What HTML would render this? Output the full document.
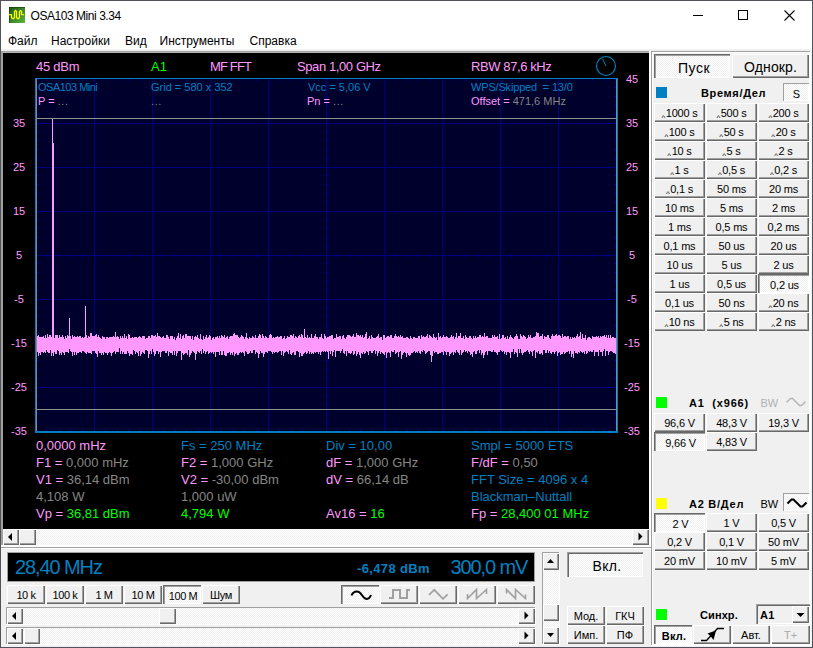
<!DOCTYPE html><html><head><meta charset="utf-8"><title>OSA103 Mini 3.34</title><style>
html,body{margin:0;padding:0}
body{width:813px;height:648px;position:relative;overflow:hidden;background:#f0f0f0;font-family:"Liberation Sans",sans-serif;color:#000}
div,span,svg{position:absolute;box-sizing:border-box;white-space:nowrap}
#win{left:0;top:0;width:813px;height:648px;border:1px solid #50535a;background:#f0f0f0}
#title{left:1px;top:1px;width:811px;height:29px;background:#fff}
#ttxt{left:29.5px;top:7px;font-size:12px;line-height:16px;letter-spacing:-0.45px}
#menu{left:1px;top:30px;width:811px;height:19px;background:#fff;font-size:12px;line-height:16px}
#menu span{top:3px}
.btn{background:#f0f0f0;box-shadow:inset 1px 1px 0 #fff,inset -1px -1px 0 #696969,inset -2px -2px 0 #a0a0a0;text-align:center;font-size:12px}
.btn.dn{background-color:#f8f8f8;background-image:conic-gradient(#fff 25%,#f0f0f0 0 50%,#fff 0 75%,#f0f0f0 0);background-size:2px 2px;box-shadow:inset 1px 1px 0 #696969,inset 2px 2px 0 #a0a0a0,inset -1px -1px 0 #fff}
.dith{background-color:#f8f8f8;background-image:conic-gradient(#fff 25%,#f0f0f0 0 50%,#fff 0 75%,#f0f0f0 0);background-size:2px 2px}
.sbb{background:#f0f0f0;box-shadow:inset 1px 1px 0 #fff,inset -1px -1px 0 #696969,inset -2px -2px 0 #a0a0a0}
.t{font-size:13px;line-height:16px}
.s{font-size:11px;line-height:14px}
.pk{color:#ff99ff}.gn{color:#00ff00}.bl{color:#0080c0}.gy{color:#868686}
.ax{font-size:11px;line-height:14px;color:#ff99ff;width:30px;text-align:center}
.b{font-weight:bold}
</style></head><body>
<div id="win"></div>
<div id="title">
<svg style="left:8px;top:6px" width="16" height="16" viewBox="0 0 16 16"><defs><linearGradient id="g" x1="0" y1="0" x2="1" y2="1"><stop offset="0" stop-color="#1a5410"/><stop offset="1" stop-color="#5cb83e"/></linearGradient></defs><rect width="16" height="16" fill="url(#g)"/><path d="M0 .5H16M.5 0V16" fill="none" stroke="#0c3c02" stroke-opacity=".55"/><path d="M0 7.5H2.5V10.5L3.5 11.5H4.5L5.5 10.5V4.5L6.5 3.5L7.5 4.5V10.5L8.5 11.5H9.5L10.5 10.5V4.5L11.5 3.5L12.5 4.5V7.5H15" fill="none" stroke="#ffff00" stroke-width="1.25" stroke-linejoin="round"/></svg>
<span id="ttxt">OSA103 Mini 3.34</span>
<svg style="left:680px;top:0" width="131" height="29" viewBox="0 0 131 29"><path d="M12 14.5H22M57.5 9.5H66.5V18.5H57.5Z" fill="none" stroke="#000" stroke-width="1" shape-rendering="crispEdges"/><path d="M103.5 9.5L113.5 19.5M113.5 9.5L103.5 19.5" fill="none" stroke="#000" stroke-width="1.1"/></svg>
</div>
<div id="menu"><span style="left:7px">Файл</span><span style="left:50px">Настройки</span><span style="left:124px">Вид</span><span style="left:158.5px">Инструменты</span><span style="left:248.5px">Справка</span></div>
<div style="left:1px;top:51px;width:650px;height:496px;background:#fff"></div>
<div style="left:1px;top:51px;width:648px;height:494px;background:#a0a0a0"></div>
<div style="left:3px;top:52px;width:646px;height:1px;background:#b8b8b8"></div>
<div style="left:3px;top:53px;width:646px;height:476px;background:#000"></div>
<svg style="left:0;top:0" width="660" height="530" viewBox="0 0 660 530" shape-rendering="crispEdges"><rect x="36" y="79" width="581" height="353" fill="#00002c"/><path d="M94.5 79V431M152.5 79V431M210.5 79V431M268.5 79V431M326.5 79V431M384.5 79V431M442.5 79V431M500.5 79V431M558.5 79V431M36 123.5H616M36 167.5H616M36 211.5H616M36 255.5H616M36 299.5H616M36 343.5H616M36 387.5H616" stroke="#000080" stroke-width="1" fill="none"/><path d="M36.5 79V81M36.5 429V431M36.5 254V257M47.5 79V81M47.5 429V431M47.5 254V257M59.5 79V81M59.5 429V431M59.5 254V257M70.5 79V81M70.5 429V431M70.5 254V257M82.5 79V81M82.5 429V431M82.5 254V257M94.5 79V81M94.5 429V431M94.5 254V257M105.5 79V81M105.5 429V431M105.5 254V257M117.5 79V81M117.5 429V431M117.5 254V257M128.5 79V81M128.5 429V431M128.5 254V257M140.5 79V81M140.5 429V431M140.5 254V257M152.5 79V81M152.5 429V431M152.5 254V257M163.5 79V81M163.5 429V431M163.5 254V257M175.5 79V81M175.5 429V431M175.5 254V257M186.5 79V81M186.5 429V431M186.5 254V257M198.5 79V81M198.5 429V431M198.5 254V257M210.5 79V81M210.5 429V431M210.5 254V257M221.5 79V81M221.5 429V431M221.5 254V257M233.5 79V81M233.5 429V431M233.5 254V257M244.5 79V81M244.5 429V431M244.5 254V257M256.5 79V81M256.5 429V431M256.5 254V257M268.5 79V81M268.5 429V431M268.5 254V257M279.5 79V81M279.5 429V431M279.5 254V257M291.5 79V81M291.5 429V431M291.5 254V257M302.5 79V81M302.5 429V431M302.5 254V257M314.5 79V81M314.5 429V431M314.5 254V257M326.5 79V81M326.5 429V431M326.5 254V257M337.5 79V81M337.5 429V431M337.5 254V257M349.5 79V81M349.5 429V431M349.5 254V257M360.5 79V81M360.5 429V431M360.5 254V257M372.5 79V81M372.5 429V431M372.5 254V257M384.5 79V81M384.5 429V431M384.5 254V257M395.5 79V81M395.5 429V431M395.5 254V257M407.5 79V81M407.5 429V431M407.5 254V257M418.5 79V81M418.5 429V431M418.5 254V257M430.5 79V81M430.5 429V431M430.5 254V257M442.5 79V81M442.5 429V431M442.5 254V257M453.5 79V81M453.5 429V431M453.5 254V257M465.5 79V81M465.5 429V431M465.5 254V257M476.5 79V81M476.5 429V431M476.5 254V257M488.5 79V81M488.5 429V431M488.5 254V257M500.5 79V81M500.5 429V431M500.5 254V257M511.5 79V81M511.5 429V431M511.5 254V257M523.5 79V81M523.5 429V431M523.5 254V257M534.5 79V81M534.5 429V431M534.5 254V257M546.5 79V81M546.5 429V431M546.5 254V257M558.5 79V81M558.5 429V431M558.5 254V257M569.5 79V81M569.5 429V431M569.5 254V257M581.5 79V81M581.5 429V431M581.5 254V257M592.5 79V81M592.5 429V431M592.5 254V257M604.5 79V81M604.5 429V431M604.5 254V257M616.5 79V81M616.5 429V431M616.5 254V257M37 79.5H39M614 79.5H616M325 79.5H328M37 87.5H39M614 87.5H616M325 87.5H328M37 96.5H39M614 96.5H616M325 96.5H328M37 105.5H39M614 105.5H616M325 105.5H328M37 114.5H39M614 114.5H616M325 114.5H328M37 123.5H39M614 123.5H616M325 123.5H328M37 131.5H39M614 131.5H616M325 131.5H328M37 140.5H39M614 140.5H616M325 140.5H328M37 149.5H39M614 149.5H616M325 149.5H328M37 158.5H39M614 158.5H616M325 158.5H328M37 167.5H39M614 167.5H616M325 167.5H328M37 175.5H39M614 175.5H616M325 175.5H328M37 184.5H39M614 184.5H616M325 184.5H328M37 193.5H39M614 193.5H616M325 193.5H328M37 202.5H39M614 202.5H616M325 202.5H328M37 211.5H39M614 211.5H616M325 211.5H328M37 219.5H39M614 219.5H616M325 219.5H328M37 228.5H39M614 228.5H616M325 228.5H328M37 237.5H39M614 237.5H616M325 237.5H328M37 246.5H39M614 246.5H616M325 246.5H328M37 255.5H39M614 255.5H616M325 255.5H328M37 263.5H39M614 263.5H616M325 263.5H328M37 272.5H39M614 272.5H616M325 272.5H328M37 281.5H39M614 281.5H616M325 281.5H328M37 290.5H39M614 290.5H616M325 290.5H328M37 299.5H39M614 299.5H616M325 299.5H328M37 307.5H39M614 307.5H616M325 307.5H328M37 316.5H39M614 316.5H616M325 316.5H328M37 325.5H39M614 325.5H616M325 325.5H328M37 334.5H39M614 334.5H616M325 334.5H328M37 343.5H39M614 343.5H616M325 343.5H328M37 351.5H39M614 351.5H616M325 351.5H328M37 360.5H39M614 360.5H616M325 360.5H328M37 369.5H39M614 369.5H616M325 369.5H328M37 378.5H39M614 378.5H616M325 378.5H328M37 387.5H39M614 387.5H616M325 387.5H328M37 395.5H39M614 395.5H616M325 395.5H328M37 404.5H39M614 404.5H616M325 404.5H328M37 413.5H39M614 413.5H616M325 413.5H328M37 422.5H39M614 422.5H616M325 422.5H328M37 431.5H39M614 431.5H616M325 431.5H328" stroke="#000080" stroke-width="1" fill="none"/><path d="M36 118.5H616M36 409.5H616" stroke="#909090" stroke-width="1" fill="none"/><path d="M37.5 336V352M38.5 335V356M39.5 337V353M40.5 337V355M41.5 337V352M42.5 337V352M43.5 336V353M44.5 338V352M45.5 335V353M46.5 338V350M47.5 334V352M48.5 337V353M49.5 335V353M50.5 335V350M51.5 337V356M52.5 119V353M53.5 143V356M54.5 338V352M55.5 335V354M56.5 335V354M57.5 335V350M58.5 338V351M59.5 335V355M60.5 337V353M61.5 337V355M62.5 335V352M63.5 337V353M64.5 339V355M65.5 336V352M66.5 338V352M67.5 335V352M68.5 336V353M69.5 318V349M70.5 336V351M71.5 339V352M72.5 335V356M73.5 337V352M74.5 336V355M75.5 337V352M76.5 337V355M77.5 336V353M78.5 337V353M79.5 336V352M80.5 336V352M81.5 338V353M82.5 337V351M83.5 338V351M84.5 337V352M85.5 306V353M86.5 335V354M87.5 338V352M88.5 336V353M89.5 337V353M90.5 333V353M91.5 333V354M92.5 336V351M93.5 336V351M94.5 336V351M95.5 335V353M96.5 334V354M97.5 337V357M98.5 335V351M99.5 337V353M100.5 338V353M101.5 339V355M102.5 336V353M103.5 337V355M104.5 337V352M105.5 339V353M106.5 337V353M107.5 337V355M108.5 338V353M109.5 337V352M110.5 337V353M111.5 337V356M112.5 337V353M113.5 336V352M114.5 337V351M115.5 332V354M116.5 337V352M117.5 336V352M118.5 337V352M119.5 339V348M120.5 336V354M121.5 338V351M122.5 336V354M123.5 338V352M124.5 334V354M125.5 338V354M126.5 336V354M127.5 339V351M128.5 334V353M129.5 335V356M130.5 338V354M131.5 338V354M132.5 337V355M133.5 338V350M134.5 337V351M135.5 337V354M136.5 337V352M137.5 338V353M138.5 337V356M139.5 336V351M140.5 337V356M141.5 338V354M142.5 336V352M143.5 336V353M144.5 336V354M145.5 339V350M146.5 338V350M147.5 338V351M148.5 336V358M149.5 336V354M150.5 338V351M151.5 335V354M152.5 335V349M153.5 336V352M154.5 336V356M155.5 335V354M156.5 337V351M157.5 333V351M158.5 336V354M159.5 336V352M160.5 337V357M161.5 338V352M162.5 337V351M163.5 336V351M164.5 338V351M165.5 338V353M166.5 335V353M167.5 335V351M168.5 337V356M169.5 339V352M170.5 336V353M171.5 336V353M172.5 336V355M173.5 339V351M174.5 337V355M175.5 340V351M176.5 338V356M177.5 336V353M178.5 333V351M179.5 338V351M180.5 334V351M181.5 339V360M182.5 336V353M183.5 335V355M184.5 338V354M185.5 334V353M186.5 334V353M187.5 336V355M188.5 336V350M189.5 336V357M190.5 336V355M191.5 339V353M192.5 336V351M193.5 340V352M194.5 337V353M195.5 336V360M196.5 337V354M197.5 335V351M198.5 338V352M199.5 339V353M200.5 334V351M201.5 339V354M202.5 340V349M203.5 336V353M204.5 339V351M205.5 337V354M206.5 335V352M207.5 338V351M208.5 337V354M209.5 335V353M210.5 336V352M211.5 340V353M212.5 338V352M213.5 337V354M214.5 339V352M215.5 337V357M216.5 337V352M217.5 336V352M218.5 338V352M219.5 336V355M220.5 338V351M221.5 335V355M222.5 336V355M223.5 337V351M224.5 335V355M225.5 338V356M226.5 337V356M227.5 336V353M228.5 339V353M229.5 337V352M230.5 336V355M231.5 336V353M232.5 336V355M233.5 334V352M234.5 333V356M235.5 335V354M236.5 335V353M237.5 335V355M238.5 337V355M239.5 338V353M240.5 337V352M241.5 335V353M242.5 336V352M243.5 337V353M244.5 339V356M245.5 337V351M246.5 333V352M247.5 338V354M248.5 339V354M249.5 337V353M250.5 338V351M251.5 338V353M252.5 336V353M253.5 337V350M254.5 338V350M255.5 335V354M256.5 338V352M257.5 338V353M258.5 336V358M259.5 334V354M260.5 335V351M261.5 338V353M262.5 334V353M263.5 336V357M264.5 338V354M265.5 336V352M266.5 337V352M267.5 338V353M268.5 338V351M269.5 335V351M270.5 334V351M271.5 335V352M272.5 338V354M273.5 337V352M274.5 338V353M275.5 337V352M276.5 337V352M277.5 336V353M278.5 337V352M279.5 337V351M280.5 336V351M281.5 336V355M282.5 339V351M283.5 338V356M284.5 336V353M285.5 339V352M286.5 338V351M287.5 336V352M288.5 337V354M289.5 337V350M290.5 335V354M291.5 335V355M292.5 336V353M293.5 334V352M294.5 338V355M295.5 336V355M296.5 337V351M297.5 338V351M298.5 336V352M299.5 335V357M300.5 337V353M301.5 334V356M302.5 335V356M303.5 338V354M304.5 329V353M305.5 337V352M306.5 338V354M307.5 335V353M308.5 338V351M309.5 337V354M310.5 338V352M311.5 334V354M312.5 338V353M313.5 338V354M314.5 336V352M315.5 334V353M316.5 337V352M317.5 337V352M318.5 339V354M319.5 337V352M320.5 337V355M321.5 334V352M322.5 338V351M323.5 339V352M324.5 334V351M325.5 336V352M326.5 338V351M327.5 337V352M328.5 337V359M329.5 336V351M330.5 336V354M331.5 335V351M332.5 335V356M333.5 339V352M334.5 338V350M335.5 338V357M336.5 334V351M337.5 337V351M338.5 337V351M339.5 336V351M340.5 336V353M341.5 339V351M342.5 336V349M343.5 335V353M344.5 338V354M345.5 339V351M346.5 337V356M347.5 335V351M348.5 335V353M349.5 335V353M350.5 336V354M351.5 337V353M352.5 336V351M353.5 334V355M354.5 337V354M355.5 337V351M356.5 333V356M357.5 335V354M358.5 335V352M359.5 336V355M360.5 335V358M361.5 337V353M362.5 335V354M363.5 338V352M364.5 337V354M365.5 334V353M366.5 332V351M367.5 339V352M368.5 338V355M369.5 336V351M370.5 339V351M371.5 335V353M372.5 337V353M373.5 338V351M374.5 338V350M375.5 338V354M376.5 337V351M377.5 336V356M378.5 334V353M379.5 338V351M380.5 337V354M381.5 337V352M382.5 340V353M383.5 335V354M384.5 335V355M385.5 338V352M386.5 337V358M387.5 336V353M388.5 336V352M389.5 337V353M390.5 335V357M391.5 335V351M392.5 338V352M393.5 338V352M394.5 336V350M395.5 334V354M396.5 336V353M397.5 337V352M398.5 336V357M399.5 337V352M400.5 335V351M401.5 337V359M402.5 336V355M403.5 338V353M404.5 338V352M405.5 338V353M406.5 337V357M407.5 337V353M408.5 338V355M409.5 339V356M410.5 336V355M411.5 338V353M412.5 339V353M413.5 337V352M414.5 337V351M415.5 338V353M416.5 338V352M417.5 338V353M418.5 336V351M419.5 336V353M420.5 339V354M421.5 335V351M422.5 337V352M423.5 336V350M424.5 337V351M425.5 337V354M426.5 336V353M427.5 334V352M428.5 338V351M429.5 335V351M430.5 336V355M431.5 337V362M432.5 338V356M433.5 334V351M434.5 337V353M435.5 338V352M436.5 337V352M437.5 340V354M438.5 333V354M439.5 337V353M440.5 336V353M441.5 338V352M442.5 337V352M443.5 335V355M444.5 337V351M445.5 337V352M446.5 336V355M447.5 337V352M448.5 338V352M449.5 338V356M450.5 337V354M451.5 335V353M452.5 337V352M453.5 336V355M454.5 339V352M455.5 337V353M456.5 333V350M457.5 338V352M458.5 336V353M459.5 336V355M460.5 333V350M461.5 338V355M462.5 338V353M463.5 336V352M464.5 339V350M465.5 335V352M466.5 337V351M467.5 338V353M468.5 338V351M469.5 336V352M470.5 336V355M471.5 338V354M472.5 339V357M473.5 336V352M474.5 338V351M475.5 336V354M476.5 338V354M477.5 337V351M478.5 337V350M479.5 335V353M480.5 335V350M481.5 337V355M482.5 336V353M483.5 337V358M484.5 333V355M485.5 337V352M486.5 336V351M487.5 336V355M488.5 338V351M489.5 338V351M490.5 338V351M491.5 338V352M492.5 335V352M493.5 337V350M494.5 335V352M495.5 337V352M496.5 337V353M497.5 336V355M498.5 339V352M499.5 334V352M500.5 339V350M501.5 338V351M502.5 335V352M503.5 335V351M504.5 338V354M505.5 337V352M506.5 339V355M507.5 336V352M508.5 339V352M509.5 337V353M510.5 335V358M511.5 337V352M512.5 338V352M513.5 339V349M514.5 337V354M515.5 336V352M516.5 334V353M517.5 336V357M518.5 339V349M519.5 339V353M520.5 334V349M521.5 336V353M522.5 337V355M523.5 335V353M524.5 336V352M525.5 337V352M526.5 339V351M527.5 338V350M528.5 335V352M529.5 337V354M530.5 335V351M531.5 338V352M532.5 338V356M533.5 337V351M534.5 337V350M535.5 336V358M536.5 332V352M537.5 333V353M538.5 333V351M539.5 337V354M540.5 336V354M541.5 336V353M542.5 334V355M543.5 339V350M544.5 336V350M545.5 337V353M546.5 337V353M547.5 335V350M548.5 335V353M549.5 338V351M550.5 339V353M551.5 336V354M552.5 334V352M553.5 336V352M554.5 336V354M555.5 335V352M556.5 334V351M557.5 336V356M558.5 335V353M559.5 335V352M560.5 336V355M561.5 338V354M562.5 334V354M563.5 337V352M564.5 336V354M565.5 336V353M566.5 337V352M567.5 336V352M568.5 336V351M569.5 339V354M570.5 337V351M571.5 339V357M572.5 337V354M573.5 338V358M574.5 337V351M575.5 338V353M576.5 336V353M577.5 334V354M578.5 337V352M579.5 336V353M580.5 332V351M581.5 339V352M582.5 334V353M583.5 338V352M584.5 338V354M585.5 335V351M586.5 340V354M587.5 338V353M588.5 337V351M589.5 337V352M590.5 338V351M591.5 339V352M592.5 336V352M593.5 337V350M594.5 337V356M595.5 337V352M596.5 336V352M597.5 337V352M598.5 336V356M599.5 338V350M600.5 336V352M601.5 337V352M602.5 336V356M603.5 336V351M604.5 335V349M605.5 337V356M606.5 335V351M607.5 338V351M608.5 335V355M609.5 338V352M610.5 335V351M611.5 338V351M612.5 337V352M613.5 337V353M614.5 338V353M615.5 338V354" stroke="#ff99ff" stroke-width="1" fill="none"/><path d="M35.5 78V433M35 78.5H618M617.5 78V433M35 431.5H618M35 432.5H618" stroke="#0080c0" stroke-width="1" fill="none"/><path d="M36.5 79V431M616.5 79V431" stroke="#808890" stroke-width="1" fill="none"/></svg><svg style="left:594px;top:54px" width="24" height="24" viewBox="0 0 24 24"><circle cx="12" cy="12" r="9.5" fill="none" stroke="#0080c0" stroke-width="1.15"/><path d="M12 12L8.5 5" stroke="#0080c0" stroke-width="1" fill="none"/></svg>
<span class="ax" style="left:4px;top:116px">35</span>
<span class="ax" style="left:4px;top:160px">25</span>
<span class="ax" style="left:4px;top:204px">15</span>
<span class="ax" style="left:4px;top:248px">5</span>
<span class="ax" style="left:4px;top:292px">-5</span>
<span class="ax" style="left:4px;top:336px">-15</span>
<span class="ax" style="left:4px;top:380px">-25</span>
<span class="ax" style="left:4px;top:424px">-35</span>
<span class="ax" style="left:617px;top:72px">45</span>
<span class="ax" style="left:617px;top:116px">35</span>
<span class="ax" style="left:617px;top:160px">25</span>
<span class="ax" style="left:617px;top:204px">15</span>
<span class="ax" style="left:617px;top:248px">5</span>
<span class="ax" style="left:617px;top:292px">-5</span>
<span class="ax" style="left:617px;top:336px">-15</span>
<span class="ax" style="left:617px;top:380px">-25</span>
<span class="ax" style="left:617px;top:424px">-35</span>
<span class="t" style="left:36px;top:59px"><span style="position:static;letter-spacing:-0.25px" class="pk">45 dBm</span></span>
<span class="t" style="left:151px;top:59px"><span style="position:static" class="gn">A1</span></span>
<span class="t" style="left:210px;top:59px"><span class="pk" style="position:static;letter-spacing:-0.85px">MF FFT</span></span>
<span class="t" style="left:297px;top:59px"><span style="position:static;letter-spacing:-0.4px" class="pk">Span 1,00 GHz</span></span>
<span class="t" style="left:471px;top:59px"><span style="position:static;letter-spacing:-0.4px" class="pk">RBW 87,6 kHz</span></span>
<span class="s bl" style="left:38px;top:80px"><span style="position:static;letter-spacing:-0.5px">OSA103 Mini</span></span>
<span class="s bl" style="left:151px;top:80px">Grid = 580 x 352</span>
<span class="s bl" style="left:308px;top:80px">Vcc = 5,06 V</span>
<span class="s bl" style="left:471px;top:80px"><span style="position:static;letter-spacing:-0.17px">WPS/Skipped&nbsp; = 13/0</span></span>
<span class="s" style="left:38px;top:94px"><span style="position:static" class="pk">P = </span><span class="gy" style="position:static;letter-spacing:0.6px">...</span></span>
<span class="s gy" style="left:151px;top:94px"><span style="position:static;letter-spacing:0.6px">...</span></span>
<span class="s" style="left:307px;top:94px"><span style="position:static" class="pk">Pn = </span><span class="gy" style="position:static;letter-spacing:0.6px">...</span></span>
<span class="s" style="left:471px;top:94px"><span style="position:static" class="pk">Offset = </span><span style="position:static" class="gy">471,6 MHz</span></span>
<span class="t" style="left:36px;top:438px"><span style="position:static" class="pk">0,0000 mHz</span></span>
<span class="t" style="left:181px;top:438px"><span style="position:static" class="bl">Fs = 250 MHz</span></span>
<span class="t" style="left:326px;top:438px"><span style="position:static" class="bl">Div = 10,00</span></span>
<span class="t" style="left:471px;top:438px"><span style="position:static" class="bl">Smpl = 5000 ETS</span></span>
<span class="t" style="left:36px;top:455px"><span style="position:static" class="pk">F1 = </span><span style="position:static" class="gy">0,000 mHz</span></span>
<span class="t" style="left:181px;top:455px"><span style="position:static" class="pk">F2 = </span><span style="position:static" class="gy">1,000 GHz</span></span>
<span class="t" style="left:326px;top:455px"><span style="position:static" class="pk">dF = </span><span style="position:static" class="gy">1,000 GHz</span></span>
<span class="t" style="left:471px;top:455px"><span style="position:static" class="pk">F/dF = </span><span style="position:static" class="gy">0,50</span></span>
<span class="t" style="left:36px;top:472px"><span style="position:static" class="pk">V1 = </span><span style="position:static" class="gy">36,14 dBm</span></span>
<span class="t" style="left:181px;top:472px"><span style="position:static" class="pk">V2 = </span><span style="position:static" class="gy">-30,00 dBm</span></span>
<span class="t" style="left:326px;top:472px"><span style="position:static" class="pk">dV = </span><span style="position:static" class="gy">66,14 dB</span></span>
<span class="t" style="left:471px;top:472px"><span style="position:static" class="bl">FFT Size = 4096 x 4</span></span>
<span class="t" style="left:36px;top:489px"><span style="position:static" class="gy">4,108 W</span></span>
<span class="t" style="left:181px;top:489px"><span style="position:static" class="gy">1,000 uW</span></span>
<span class="t" style="left:471px;top:489px"><span style="position:static" class="bl">Blackman–Nuttall</span></span>
<span class="t" style="left:36px;top:506px"><span style="position:static" class="pk">Vp = </span><span style="position:static" class="gn">36,81 dBm</span></span>
<span class="t" style="left:181px;top:506px"><span style="position:static" class="gn">4,794 W</span></span>
<span class="t" style="left:326px;top:506px"><span style="position:static" class="pk">Av16 = </span><span style="position:static" class="gn">16</span></span>
<span class="t" style="left:471px;top:506px"><span style="position:static" class="pk">Fp = </span><span style="position:static" class="gn">28,400 01 MHz</span></span>
<div class="dith" style="left:3px;top:529px;width:646px;height:16px"></div>
<div class="sbb" style="left:3px;top:529px;width:16px;height:16px"></div>
<div class="sbb" style="left:632px;top:529px;width:17px;height:16px"></div>
<svg style="left:3px;top:529px" width="16" height="16" viewBox="0 0 16 16"><path d="M9 4V12L5 8Z" fill="#000"/></svg>
<svg style="left:632px;top:529px" width="17" height="16" viewBox="0 0 17 16"><path d="M6.5 3.5V11.5L10.5 7.5Z" fill="#000"/></svg>
<div class="sbb" style="left:19px;top:529px;width:17px;height:16px"></div>
<div style="left:1px;top:547px;width:650px;height:1px;background:#a0a0a0"></div>
<div style="left:2px;top:548px;width:649px;height:1px;background:#fff"></div>
<div style="left:7px;top:552px;width:528px;height:30px;background:#a0a0a0"></div>
<div style="left:8px;top:553px;width:526px;height:28px;background:#000"></div>
<span class="bl" style="left:15px;top:555px;font-size:20px;line-height:24px;letter-spacing:-1.1px">28,40 MHz</span>
<span class="bl b" style="left:357px;top:561px;font-size:13px;line-height:16px;letter-spacing:0.35px">-6,478 dBm</span>
<span class="bl" style="left:450.5px;top:555px;font-size:20px;line-height:24px;letter-spacing:-1.1px">300,0 mV</span>
<div class="btn" style="left:7px;top:585px;width:38px;height:19px;line-height:21px;font-size:11px;letter-spacing:-0.4px">10 k</div>
<div class="btn" style="left:46px;top:585px;width:38px;height:19px;line-height:21px;font-size:11px;letter-spacing:-0.4px">100 k</div>
<div class="btn" style="left:85px;top:585px;width:38px;height:19px;line-height:21px;font-size:11px;letter-spacing:-0.4px">1 M</div>
<div class="btn" style="left:124px;top:585px;width:38px;height:19px;line-height:21px;font-size:11px;letter-spacing:-0.4px">10 M</div>
<div class="btn dn" style="left:163px;top:585px;width:38px;height:19px;line-height:23px;font-size:11px;letter-spacing:-0.4px;text-indent:2px">100 M</div>
<div class="btn" style="left:202px;top:585px;width:38px;height:19px;line-height:21px;font-size:11px;letter-spacing:-0.4px">Шум</div>
<div class="btn dn" style="left:341px;top:585px;width:38px;height:19px"></div>
<svg style="left:341px;top:585px" width="38" height="19" viewBox="0 0 38 19"><path d="M10.5 10.5Q12 6.5 16 6.5Q18.5 6.5 21 10.2Q23.5 14 26 14Q28.5 14 30 10" fill="none" stroke="#000" stroke-width="2" stroke-linejoin="miter"/></svg>
<div class="btn" style="left:380px;top:585px;width:38px;height:19px"></div>
<svg style="left:380px;top:585px" width="38" height="19" viewBox="0 0 38 19"><path d="M9 13H13V5H19.5V13H26.5V5H29.5" fill="none" stroke="#a0a0a0" stroke-width="2" stroke-linejoin="miter" shape-rendering="crispEdges"/></svg>
<div class="btn" style="left:419px;top:585px;width:38px;height:19px"></div>
<svg style="left:419px;top:585px" width="38" height="19" viewBox="0 0 38 19"><path d="M10 10L15.2 4.8L24 13.8L28.6 9.4" fill="none" stroke="#a0a0a0" stroke-width="1.7" stroke-linejoin="miter"/></svg>
<div class="btn" style="left:458px;top:585px;width:38px;height:19px"></div>
<svg style="left:458px;top:585px" width="38" height="19" viewBox="0 0 38 19"><path d="M9.5 9V13.5L18.5 4.5V13.5L28.5 4.5V9" fill="none" stroke="#a0a0a0" stroke-width="1.6" stroke-linejoin="miter"/></svg>
<div class="btn" style="left:497px;top:585px;width:38px;height:19px"></div>
<svg style="left:497px;top:585px" width="38" height="19" viewBox="0 0 38 19"><path d="M9.5 8.5V4.5L18.5 13.5V4.5L28.5 13.5V9.5" fill="none" stroke="#a0a0a0" stroke-width="1.6" stroke-linejoin="miter"/></svg>
<div style="left:6px;top:607px;width:530px;height:18px;background:#fff"></div><div style="left:6px;top:607px;width:529px;height:17px;background:#a0a0a0"></div>
<div style="left:6px;top:627px;width:530px;height:18px;background:#fff"></div><div style="left:6px;top:627px;width:529px;height:17px;background:#a0a0a0"></div>
<div class="dith" style="left:7px;top:608px;width:528px;height:16px"></div>
<div class="sbb" style="left:7px;top:608px;width:16px;height:16px"></div>
<div class="sbb" style="left:518px;top:608px;width:17px;height:16px"></div>
<svg style="left:7px;top:608px" width="16" height="16" viewBox="0 0 16 16"><path d="M9 4V12L5 8Z" fill="#000"/></svg>
<svg style="left:518px;top:608px" width="17" height="16" viewBox="0 0 17 16"><path d="M6.5 3.5V11.5L10.5 7.5Z" fill="#000"/></svg>
<div class="sbb" style="left:159px;top:608px;width:17px;height:16px"></div>
<div class="dith" style="left:7px;top:628px;width:528px;height:16px"></div>
<div class="sbb" style="left:7px;top:628px;width:16px;height:16px"></div>
<div class="sbb" style="left:518px;top:628px;width:17px;height:16px"></div>
<svg style="left:7px;top:628px" width="16" height="16" viewBox="0 0 16 16"><path d="M9 4V12L5 8Z" fill="#000"/></svg>
<svg style="left:518px;top:628px" width="17" height="16" viewBox="0 0 17 16"><path d="M6.5 3.5V11.5L10.5 7.5Z" fill="#000"/></svg>
<div class="sbb" style="left:24px;top:628px;width:16px;height:16px"></div>
<div style="left:542px;top:552px;width:18px;height:93px;background:#fff"></div><div style="left:542px;top:552px;width:17px;height:92px;background:#a0a0a0"></div>
<div class="dith" style="left:543px;top:553px;width:16px;height:91px"></div>
<div class="sbb" style="left:543px;top:553px;width:16px;height:17px"></div>
<div class="sbb" style="left:543px;top:627px;width:16px;height:17px"></div>
<div class="sbb" style="left:543px;top:604px;width:16px;height:17px"></div>
<svg style="left:543px;top:553px" width="16" height="16" viewBox="0 0 16 16"><path d="M4 10H11L7.5 6Z" fill="#000"/></svg>
<svg style="left:543px;top:627px" width="16" height="16" viewBox="0 0 16 16"><path d="M4 6H11L7.5 10Z" fill="#000"/></svg>
<div class="btn dn" style="left:567px;top:552px;width:76px;height:25px;line-height:28px;font-size:14px;letter-spacing:0.3px;text-indent:4px;box-shadow:inset 1px 1px 0 #a0a0a0,inset 2px 2px 0 #696969,inset -1px -1px 0 #fff">Вкл.</div>
<div class="btn" style="left:567px;top:606px;width:38px;height:19px;line-height:21px;font-size:11px">Мод.</div>
<div class="btn" style="left:606px;top:606px;width:38px;height:19px;line-height:21px;font-size:11px">ГКЧ</div>
<div class="btn" style="left:567px;top:625px;width:38px;height:19px;line-height:21px;font-size:11px">Имп.</div>
<div class="btn" style="left:606px;top:625px;width:38px;height:19px;line-height:21px;font-size:11px">ПФ</div>
<div style="left:651px;top:51px;width:160px;height:595px;background:#fff"></div>
<div style="left:651px;top:51px;width:159px;height:594px;background:#a0a0a0"></div>
<div style="left:652px;top:52px;width:158px;height:593px;background:#fff"></div>
<div style="left:653px;top:53px;width:156px;height:591px;background:#f0f0f0"></div>
<div class="btn dn" style="left:654px;top:54px;width:76px;height:24px;line-height:28px;font-size:14px;letter-spacing:0.55px;text-indent:4px">Пуск</div>
<div class="btn" style="left:732px;top:54px;width:77px;height:24px;line-height:26px;font-size:14px;letter-spacing:0.1px">Однокр.</div>
<div style="left:656px;top:87px;width:11px;height:11px;background:#0080c0"></div>
<span class="b" style="left:701px;top:86px;font-size:11px;line-height:14px;letter-spacing:0.65px">Время/Дел</span>
<div class="btn dn" style="left:783px;top:83px;width:26px;height:18px;line-height:22px;font-size:11px;text-indent:1px;box-shadow:inset 1px 1px 0 #a0a0a0,inset -1px -1px 0 #fff">S</div>
<div class="btn" style="left:654px;top:103px;width:51px;height:19px;line-height:21px;font-size:11px;letter-spacing:-0.2px"><span style="position:static;font-size:8px;vertical-align:-3px;letter-spacing:0;color:#000;margin-right:0.5px">^</span>1000 s</div>
<div class="btn" style="left:706px;top:103px;width:51px;height:19px;line-height:21px;font-size:11px;letter-spacing:-0.2px"><span style="position:static;font-size:8px;vertical-align:-3px;letter-spacing:0;color:#000;margin-right:0.5px">^</span>500 s</div>
<div class="btn" style="left:758px;top:103px;width:51px;height:19px;line-height:21px;font-size:11px;letter-spacing:-0.2px"><span style="position:static;font-size:8px;vertical-align:-3px;letter-spacing:0;color:#000;margin-right:0.5px">^</span>200 s</div>
<div class="btn" style="left:654px;top:122px;width:51px;height:19px;line-height:21px;font-size:11px;letter-spacing:-0.2px"><span style="position:static;font-size:8px;vertical-align:-3px;letter-spacing:0;color:#000;margin-right:0.5px">^</span>100 s</div>
<div class="btn" style="left:706px;top:122px;width:51px;height:19px;line-height:21px;font-size:11px;letter-spacing:-0.2px"><span style="position:static;font-size:8px;vertical-align:-3px;letter-spacing:0;color:#000;margin-right:0.5px">^</span>50 s</div>
<div class="btn" style="left:758px;top:122px;width:51px;height:19px;line-height:21px;font-size:11px;letter-spacing:-0.2px"><span style="position:static;font-size:8px;vertical-align:-3px;letter-spacing:0;color:#000;margin-right:0.5px">^</span>20 s</div>
<div class="btn" style="left:654px;top:141px;width:51px;height:19px;line-height:21px;font-size:11px;letter-spacing:-0.2px"><span style="position:static;font-size:8px;vertical-align:-3px;letter-spacing:0;color:#000;margin-right:0.5px">^</span>10 s</div>
<div class="btn" style="left:706px;top:141px;width:51px;height:19px;line-height:21px;font-size:11px;letter-spacing:-0.2px"><span style="position:static;font-size:8px;vertical-align:-3px;letter-spacing:0;color:#000;margin-right:0.5px">^</span>5 s</div>
<div class="btn" style="left:758px;top:141px;width:51px;height:19px;line-height:21px;font-size:11px;letter-spacing:-0.2px"><span style="position:static;font-size:8px;vertical-align:-3px;letter-spacing:0;color:#000;margin-right:0.5px">^</span>2 s</div>
<div class="btn" style="left:654px;top:160px;width:51px;height:19px;line-height:21px;font-size:11px;letter-spacing:-0.2px"><span style="position:static;font-size:8px;vertical-align:-3px;letter-spacing:0;color:#000;margin-right:0.5px">^</span>1 s</div>
<div class="btn" style="left:706px;top:160px;width:51px;height:19px;line-height:21px;font-size:11px;letter-spacing:-0.2px"><span style="position:static;font-size:8px;vertical-align:-3px;letter-spacing:0;color:#000;margin-right:0.5px">^</span>0,5 s</div>
<div class="btn" style="left:758px;top:160px;width:51px;height:19px;line-height:21px;font-size:11px;letter-spacing:-0.2px"><span style="position:static;font-size:8px;vertical-align:-3px;letter-spacing:0;color:#000;margin-right:0.5px">^</span>0,2 s</div>
<div class="btn" style="left:654px;top:179px;width:51px;height:19px;line-height:21px;font-size:11px;letter-spacing:-0.2px"><span style="position:static;font-size:8px;vertical-align:-3px;letter-spacing:0;color:#000;margin-right:0.5px">^</span>0,1 s</div>
<div class="btn" style="left:706px;top:179px;width:51px;height:19px;line-height:21px;font-size:11px;letter-spacing:-0.2px">50 ms</div>
<div class="btn" style="left:758px;top:179px;width:51px;height:19px;line-height:21px;font-size:11px;letter-spacing:-0.2px">20 ms</div>
<div class="btn" style="left:654px;top:198px;width:51px;height:19px;line-height:21px;font-size:11px;letter-spacing:-0.2px">10 ms</div>
<div class="btn" style="left:706px;top:198px;width:51px;height:19px;line-height:21px;font-size:11px;letter-spacing:-0.2px">5 ms</div>
<div class="btn" style="left:758px;top:198px;width:51px;height:19px;line-height:21px;font-size:11px;letter-spacing:-0.2px">2 ms</div>
<div class="btn" style="left:654px;top:217px;width:51px;height:19px;line-height:21px;font-size:11px;letter-spacing:-0.2px">1 ms</div>
<div class="btn" style="left:706px;top:217px;width:51px;height:19px;line-height:21px;font-size:11px;letter-spacing:-0.2px">0,5 ms</div>
<div class="btn" style="left:758px;top:217px;width:51px;height:19px;line-height:21px;font-size:11px;letter-spacing:-0.2px">0,2 ms</div>
<div class="btn" style="left:654px;top:236px;width:51px;height:19px;line-height:21px;font-size:11px;letter-spacing:-0.2px">0,1 ms</div>
<div class="btn" style="left:706px;top:236px;width:51px;height:19px;line-height:21px;font-size:11px;letter-spacing:-0.2px">50 us</div>
<div class="btn" style="left:758px;top:236px;width:51px;height:19px;line-height:21px;font-size:11px;letter-spacing:-0.2px">20 us</div>
<div class="btn" style="left:654px;top:255px;width:51px;height:19px;line-height:21px;font-size:11px;letter-spacing:-0.2px">10 us</div>
<div class="btn" style="left:706px;top:255px;width:51px;height:19px;line-height:21px;font-size:11px;letter-spacing:-0.2px">5 us</div>
<div class="btn" style="left:758px;top:255px;width:51px;height:19px;line-height:21px;font-size:11px;letter-spacing:-0.2px">2 us</div>
<div class="btn" style="left:654px;top:274px;width:51px;height:19px;line-height:21px;font-size:11px;letter-spacing:-0.2px">1 us</div>
<div class="btn" style="left:706px;top:274px;width:51px;height:19px;line-height:21px;font-size:11px;letter-spacing:-0.2px">0,5 us</div>
<div class="btn dn" style="left:758px;top:274px;width:51px;height:19px;line-height:23px;font-size:11px;letter-spacing:-0.2px;text-indent:2px">0,2 us</div>
<div class="btn" style="left:654px;top:293px;width:51px;height:19px;line-height:21px;font-size:11px;letter-spacing:-0.2px">0,1 us</div>
<div class="btn" style="left:706px;top:293px;width:51px;height:19px;line-height:21px;font-size:11px;letter-spacing:-0.2px">50 ns</div>
<div class="btn" style="left:758px;top:293px;width:51px;height:19px;line-height:21px;font-size:11px;letter-spacing:-0.2px"><span style="position:static;font-size:8px;vertical-align:-3px;letter-spacing:0;color:#000;margin-right:0.5px">^</span>20 ns</div>
<div class="btn" style="left:654px;top:312px;width:51px;height:19px;line-height:21px;font-size:11px;letter-spacing:-0.2px"><span style="position:static;font-size:8px;vertical-align:-3px;letter-spacing:0;color:#000;margin-right:0.5px">^</span>10 ns</div>
<div class="btn" style="left:706px;top:312px;width:51px;height:19px;line-height:21px;font-size:11px;letter-spacing:-0.2px"><span style="position:static;font-size:8px;vertical-align:-3px;letter-spacing:0;color:#000;margin-right:0.5px">^</span>5 ns</div>
<div class="btn" style="left:758px;top:312px;width:51px;height:19px;line-height:21px;font-size:11px;letter-spacing:-0.2px"><span style="position:static;font-size:8px;vertical-align:-3px;letter-spacing:0;color:#000;margin-right:0.5px">^</span>2 ns</div>
<div style="left:656px;top:397px;width:11px;height:11px;background:#00ff00"></div>
<span class="b" style="left:689px;top:396px;font-size:11px;line-height:14px;letter-spacing:0.8px">A1&nbsp; (x966)</span>
<span style="left:760.5px;top:396px;font-size:11px;line-height:14px;color:#b0b0b0">BW</span>
<svg style="left:783px;top:393px" width="26" height="18" viewBox="0 0 26 18"><path d="M3.5 9.5L7.5 5.5H9.5L16.5 12.5H18.5L22.5 8.5" fill="none" stroke="#b4b4b4" stroke-width="1.4"/></svg>
<div class="btn" style="left:654px;top:413px;width:51px;height:19px;line-height:21px;font-size:11px;letter-spacing:-0.2px">96,6 V</div>
<div class="btn" style="left:706px;top:413px;width:51px;height:19px;line-height:21px;font-size:11px;letter-spacing:-0.2px">48,3 V</div>
<div class="btn" style="left:758px;top:413px;width:51px;height:19px;line-height:21px;font-size:11px;letter-spacing:-0.2px">19,3 V</div>
<div class="btn dn" style="left:654px;top:432px;width:51px;height:19px;line-height:23px;font-size:11px;letter-spacing:-0.2px;text-indent:2px">9,66 V</div>
<div class="btn" style="left:706px;top:432px;width:51px;height:19px;line-height:21px;font-size:11px;letter-spacing:-0.2px">4,83 V</div>
<div style="left:656px;top:498px;width:11px;height:11px;background:#ffff00"></div>
<span class="b" style="left:689px;top:497px;font-size:11px;line-height:14px;letter-spacing:0.75px">A2 В/Дел</span>
<span style="left:760.5px;top:497px;font-size:11px;line-height:14px">BW</span>
<div class="btn dn" style="left:783px;top:493px;width:26px;height:18px;box-shadow:inset 1px 1px 0 #a0a0a0,inset -1px -1px 0 #fff"></div>
<svg style="left:783px;top:493px" width="26" height="18" viewBox="0 0 26 18"><path d="M4.5 10.5L8.5 6.5H10.5L17.5 13.5H19.5L23.5 9.5" fill="none" stroke="#000" stroke-width="2"/></svg>
<div class="btn dn" style="left:654px;top:513px;width:51px;height:19px;line-height:23px;font-size:11px;letter-spacing:-0.2px;text-indent:2px">2 V</div>
<div class="btn" style="left:706px;top:513px;width:51px;height:19px;line-height:21px;font-size:11px;letter-spacing:-0.2px">1 V</div>
<div class="btn" style="left:758px;top:513px;width:51px;height:19px;line-height:21px;font-size:11px;letter-spacing:-0.2px">0,5 V</div>
<div class="btn" style="left:654px;top:532px;width:51px;height:19px;line-height:21px;font-size:11px;letter-spacing:-0.2px">0,2 V</div>
<div class="btn" style="left:706px;top:532px;width:51px;height:19px;line-height:21px;font-size:11px;letter-spacing:-0.2px">0,1 V</div>
<div class="btn" style="left:758px;top:532px;width:51px;height:19px;line-height:21px;font-size:11px;letter-spacing:-0.2px">50 mV</div>
<div class="btn" style="left:654px;top:551px;width:51px;height:19px;line-height:21px;font-size:11px;letter-spacing:-0.2px">20 mV</div>
<div class="btn" style="left:706px;top:551px;width:51px;height:19px;line-height:21px;font-size:11px;letter-spacing:-0.2px">10 mV</div>
<div class="btn" style="left:758px;top:551px;width:51px;height:19px;line-height:21px;font-size:11px;letter-spacing:-0.2px">5 mV</div>
<div style="left:656px;top:609px;width:11px;height:11px;background:#00ff00"></div>
<span class="b" style="left:700px;top:608px;font-size:11px;line-height:14px;letter-spacing:0.1px">Синхр.</span>
<div style="left:756px;top:604px;width:54px;height:20px;background:#f0f0f0;box-shadow:inset 1px 1px 0 #a0a0a0,inset 2px 2px 0 #696969,inset -1px -1px 0 #fff"></div>
<span class="b" style="left:760px;top:608px;font-size:11px;line-height:14px;letter-spacing:0.4px">A1</span>
<div class="sbb" style="left:792px;top:606px;width:17px;height:17px"></div>
<svg style="left:792px;top:606px" width="17" height="17" viewBox="0 0 17 17"><path d="M4.5 7H12.5L8.5 11Z" fill="#000"/></svg>
<div class="btn dn b" style="left:654px;top:625px;width:38px;height:19px;line-height:23px;font-size:11px;letter-spacing:0.2px;text-indent:2px">Вкл.</div>
<div class="btn" style="left:693px;top:625px;width:38px;height:19px"></div>
<svg style="left:693px;top:625px" width="38" height="19" viewBox="0 0 38 19"><path d="M8 15.5H13.5L24.5 3.5H31" fill="none" stroke="#000" stroke-width="1.3"/><path d="M23 5.5L14.5 8.5L17.5 11L20.5 15Z" fill="#000"/></svg>
<div class="btn" style="left:732px;top:625px;width:38px;height:19px;line-height:21px;font-size:11px">Авт.</div>
<div class="btn" style="left:771px;top:625px;width:39px;height:19px;line-height:21px;font-size:11px;color:#a8a8a8">T+</div>
</body></html>
